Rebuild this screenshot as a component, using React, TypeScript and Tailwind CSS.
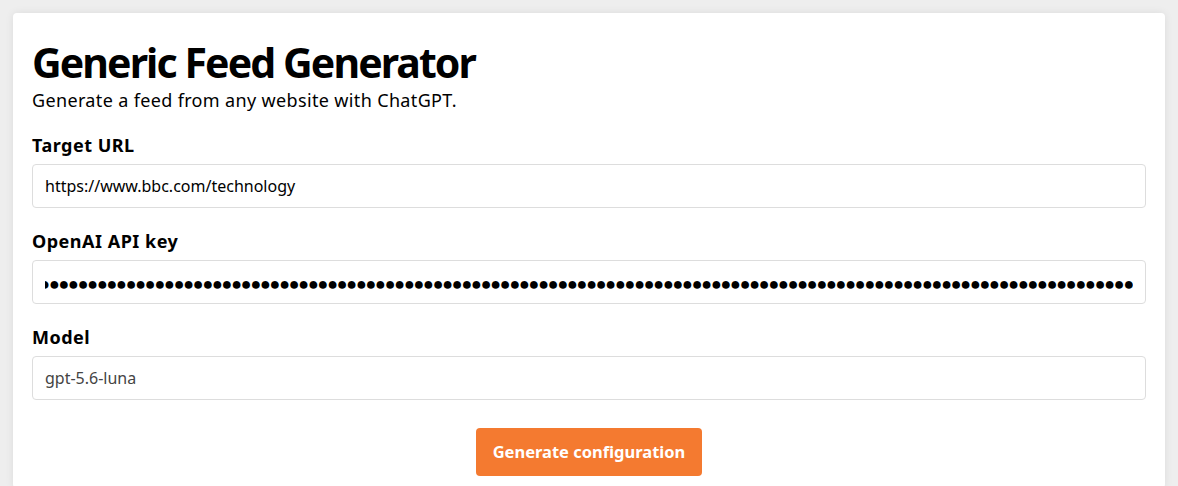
import React from "react";

export default function App() {
  const dots = Array.from({ length: 114 });
  return (
    <div className="min-h-[486px] bg-[#eeeeee] p-[13px] pb-0" style={{ fontFamily: '"Noto Sans", "Open Sans", sans-serif' }}>
      <div className="bg-white rounded-[4px] shadow-[0_0_8px_rgba(0,0,0,0.08)] px-[19px] pt-[23px] pb-[12px] text-black">
        <h1 className="text-[41px] font-bold leading-[52px] tracking-[-1.9px]">Generic Feed Generator</h1>
        <p className="text-[18px] leading-[24px] tracking-[0.35px]">Generate a feed from any website with ChatGPT.</p>

        <div className="mt-[21px] flex flex-col">
          <label className="text-[18px] font-bold leading-[24px] tracking-[0.5px]">Target URL</label>
          <input
            readOnly
            value="https://www.bbc.com/technology"
            className="mt-[7px] h-[44px] rounded-[4px] border border-[#dddddd] px-[12px] text-[16px] text-black outline-none"
          />
        </div>

        <div className="mt-[21px] flex flex-col">
          <label className="text-[18px] font-bold leading-[24px] tracking-[0.5px]">OpenAI API key</label>
          <div className="mt-[7px] h-[44px] rounded-[4px] border border-[#dddddd] pl-[12px] pr-[12px] flex items-center overflow-hidden">
            <div className="w-full overflow-hidden flex justify-end pt-[3px]">
              <div
                className="flex flex-none text-[18px] leading-[20px] text-black"
                style={{ fontFamily: '"Liberation Sans", Arial, sans-serif' }}
              >
                {dots.map((_, i) => (
                  <span key={i} className="inline-block w-[9.6px] text-center">●</span>
                ))}
              </div>
            </div>
          </div>
        </div>

        <div className="mt-[21px] flex flex-col">
          <label className="text-[18px] font-bold leading-[24px] tracking-[0.5px]">Model</label>
          <input
            readOnly
            value="gpt-5.6-luna"
            className="mt-[7px] h-[44px] rounded-[4px] border border-[#dddddd] px-[12px] text-[16px] text-[#444444] outline-none"
          />
        </div>

        <div className="mt-[28px] flex justify-center">
          <button className="h-[48px] w-[226px] rounded-[4px] bg-[#f47a30] text-[16.5px] font-bold text-white">
            Generate configuration
          </button>
        </div>
      </div>
    </div>
  );
}
